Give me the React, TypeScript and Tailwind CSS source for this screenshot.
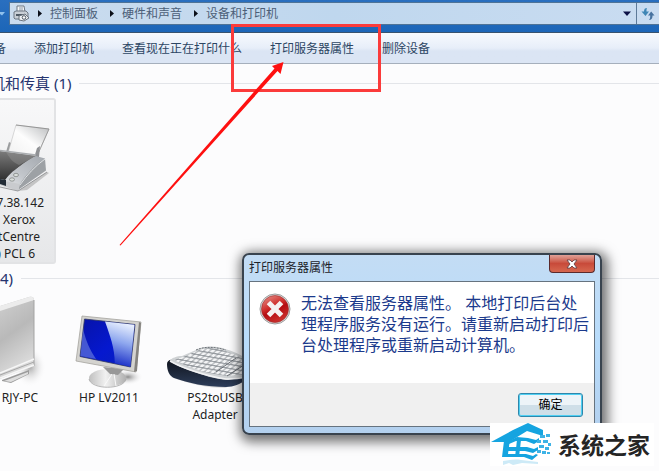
import { useState } from "react"
import type { ReactNode } from "react"

const crumbs = ["控制面板", "硬件和声音", "设备和打印机"]

const commands = [
  "备",
  "添加打印机",
  "查看现在正在打印什么",
  "打印服务器属性",
  "删除设备",
]

const PrinterSmallIcon = () => (
  <svg width="17" height="17" viewBox="0 0 17 17" aria-hidden="true">
    <path d="M4 1h7l1 6H4z" fill="#f5f7f9" stroke="#6d7782" />
    <path d="M6 3h4M6 5h4" stroke="#8d98a5" />
    <path d="M1 7l2-1h10l2 2v5l-2 1H2l-1-1z" fill="#c9cfd6" stroke="#6d7782" />
    <path d="M3 9h8v2H3z" fill="#4e5964" />
    <path d="M6 11l6-2 4 4-5 3-5-1z" fill="#eef1f4" stroke="#6a747f" />
    <circle cx="11" cy="12.5" r="1.8" fill="#fff" stroke="#4e5964" />
  </svg>
)

const RefreshIcon = () => (
  <svg width="14" height="14" viewBox="0 0 14 14" aria-hidden="true">
    <path d="M6 1C4 1 3 2 3 4.500H0.500L4.500 9l3.500-4.500H5.500C5.500 3 5.500 2 6 1z" fill="#3f86b5" />
    <path d="M8 13c2 0 3.500-1 3.500-4.500h2L10.200 4.500 7 8.500h2.200C9.200 11 9 12 8 13z" fill="#47729f" />
  </svg>
)

const PrinterIcon = () => (
  <svg width="56" height="76" viewBox="0 118 56 76" aria-hidden="true">
    <defs>
      <linearGradient id="paper" x1="0" y1="1" x2="1" y2="0">
        <stop offset="0" stopColor="#f0f0f0" />
        <stop offset="0.500" stopColor="#fdfdfd" />
        <stop offset="1" stopColor="#b9bbbd" />
      </linearGradient>
      <linearGradient id="tray" x1="0" y1="0" x2="0" y2="1">
        <stop offset="0" stopColor="#7c7c7c" />
        <stop offset="1" stopColor="#303030" />
      </linearGradient>
      <linearGradient id="side" x1="1" y1="0" x2="0" y2="1">
        <stop offset="0" stopColor="#a3a8ae" />
        <stop offset="0.600" stopColor="#c2c6cb" />
        <stop offset="1" stopColor="#e3e5e7" />
      </linearGradient>
    </defs>
    <path d="M18 191L47 172l2 1-22 17z" fill="#999" opacity="0.500" />
    <path d="M6 152l3-10 2 1-1 10z" fill="#9a9c9e" />
    <path d="M16 125l33 4-12 27-29-3z" fill="url(#paper)" stroke="#b5b5b5" strokeWidth="0.500" />
    <path d="M16 125l33 4" stroke="#888" strokeWidth="0.800" />
    <path d="M49 129l-12 27" stroke="#909090" strokeWidth="0.800" />
    <path d="M34 158l3-10 3-2-1 11z" fill="#8f9194" />
    <path d="M0 151l36 5-17 11-14 13-5-1z" fill="url(#tray)" />
    <path d="M6 152c4 6 6 10 13 13l17-9z" fill="#999" opacity="0.400" />
    <path d="M0 150.500l36 4.500" stroke="#aaadb0" strokeWidth="1.500" />
    <path d="M36 156l9 2.500L20 187l-15-6c2-5 8-10 14-14 6-5 11-8 17-11z" fill="url(#side)" />
    <path d="M45 158.500l1 12L18 190l2-6c5-8 14-19 25-25.500z" fill="#9da1a5" />
    <path d="M20 185c7-10 15-19 25-26" stroke="#dfe2e4" fill="none" />
    <path d="M0 180l5 1 15 3-2 7-18-6z" fill="#c9cbce" />
    <path d="M0 179l6 1v6l-6-2z" fill="#222c36" />
    <path d="M0 187l18 4 29-19" stroke="#858789" strokeWidth="0.800" fill="none" />
    <ellipse cx="16" cy="175" rx="2.500" ry="1.700" fill="#d9dedb" stroke="#838785" strokeWidth="0.800" />
    <ellipse cx="12" cy="179.500" rx="2.500" ry="1.700" fill="#d9dedb" stroke="#838785" strokeWidth="0.800" />
  </svg>
)

const TowerIcon = () => (
  <svg width="56" height="93" viewBox="0 297 56 93" aria-hidden="true">
    <defs>
      <linearGradient id="tower" x1="0" y1="0" x2="0.300" y2="1">
        <stop offset="0" stopColor="#d0d0d0" />
        <stop offset="0.500" stopColor="#b9b9b9" />
        <stop offset="1" stopColor="#dedede" />
      </linearGradient>
      <radialGradient id="towerShade">
        <stop offset="0" stopColor="#a8a8a8" />
        <stop offset="1" stopColor="#fcfcfd" stopOpacity="0" />
      </radialGradient>
    </defs>
    <ellipse cx="30" cy="368" rx="16" ry="20" fill="url(#towerShade)" />
    <path d="M0 307l29-9c3-1 5 0 5 3v66L0 380z" fill="url(#tower)" />
    <path d="M0 307l29-9c3-1 5 0 5 3L0 312z" fill="#ececec" />
    <path d="M34 301v66" stroke="#a3a3a3" />
    <path d="M0 374l34-14M0 379l34-13" stroke="#f6f6f6" strokeWidth="1.500" />
    <path d="M0 376l34-13" stroke="#a6a6a6" />
    <path d="M2 381l27-10v4l-18 9-9-2z" fill="#9b9b9b" />
    <path d="M4 382l24-9v2l-17 8z" fill="#dedede" />
  </svg>
)

const MonitorIcon = () => (
  <svg width="70" height="75" viewBox="74 315 70 75" aria-hidden="true">
    <defs>
      <linearGradient id="screen" x1="0" y1="0" x2="1" y2="1">
        <stop offset="0" stopColor="#0713a8" />
        <stop offset="0.550" stopColor="#0518cf" />
        <stop offset="1" stopColor="#0a21b8" />
      </linearGradient>
      <linearGradient id="glare" x1="0.600" y1="0" x2="0.400" y2="1">
        <stop offset="0" stopColor="#eef4ff" />
        <stop offset="0.450" stopColor="#8ea7ee" />
        <stop offset="1" stopColor="#1226c4" />
      </linearGradient>
      <linearGradient id="stand">
        <stop offset="0" stopColor="#c0c0c0" />
        <stop offset="0.450" stopColor="#f1f1f1" />
        <stop offset="1" stopColor="#b0b0b0" />
      </linearGradient>
      <radialGradient id="standShade">
        <stop offset="0" stopColor="#8c8c8c" />
        <stop offset="1" stopColor="#fcfcfd" stopOpacity="0" />
      </radialGradient>
    </defs>
    <ellipse cx="128" cy="378" rx="15" ry="8" fill="url(#standShade)" />
    <ellipse cx="107.500" cy="379" rx="18.500" ry="9" fill="url(#stand)" />
    <path d="M89 380c2 11 35 11 37 0" fill="none" stroke="#a5a5a5" strokeWidth="0.800" />
    <path d="M103 368l21 2-6 6-8-1z" fill="#989898" />
    <path d="M112 375l-8 12M114 375l2 12" stroke="#fafafa" />
    <path d="M82 317l59 6-5 50-60-11z" fill="#d4d3cf" stroke="#a5a39e" strokeWidth="0.800" />
    <path d="M139 323l2 1-4 48-3 1z" fill="#85837f" />
    <path d="M84.500 320l50.500 5.500-4.500 42.500-50.500-10.500z" fill="url(#screen)" stroke="#30375f" strokeWidth="0.800" />
    <path d="M105 322.500l29.500 3.200-4.200 42-15.500-3.500c0-15-5-28-9.800-41.700z" fill="url(#glare)" />
    <path d="M83 330c3 12 7 21 13 30l-15.500-3z" fill="#6175dc" opacity="0.700" />
  </svg>
)

const KeyboardIcon = () => (
  <svg width="84" height="50" viewBox="162 340 84 50" aria-hidden="true">
    <defs>
      <pattern id="keys" width="5" height="4" patternUnits="userSpaceOnUse" patternTransform="rotate(10) skewX(-38)">
        <rect width="5" height="4" fill="#92979c" />
        <rect x="0.500" y="0.500" width="4" height="2.900" rx="0.500" fill="#f3f4f5" />
      </pattern>
      <linearGradient id="rest" x1="0" y1="0" x2="0" y2="1">
        <stop offset="0" stopColor="#10141d" />
        <stop offset="1" stopColor="#2d3d5a" />
      </linearGradient>
    </defs>
    <path d="M171 378c20 8 40 11 54 11l20-9v-6z" fill="#bbb" opacity="0.500" />
    <path d="M167 365c0-3 3-5 6-4l57 16 16-2v6c-6 4-12 7-20 7-20 0-38-4-52-9-5-2-7-8-7-14z" fill="url(#rest)" />
    <path d="M170 362c1-3 7-5 12-5l14-6c9-5 22-4 29-1 8 2 15 5 21 10v18l-18 3c-14-1-25-5-37-9-8-3-16-6-21-10z" fill="#cfd2d4" />
    <path d="M174 361l9-3 14-6c9-4 20-3 28 0 7 2 14 5 20 9v14l-17 2c-17-2-37-7-54-16z" fill="url(#keys)" />
    <path d="M170 362c12 7 36 15 56 18 7 0 13 0 20-2" fill="none" stroke="#f1f2f3" strokeWidth="1.500" />
    <path d="M216 373l20-14M227 377l17-11" stroke="#686d73" />
    <path d="M196 351c9-4 20-3 30 0" stroke="#6b7177" fill="none" strokeDasharray="2 1" />
  </svg>
)

const ErrorIcon = () => (
  <svg width="32" height="32" viewBox="0 0 32 32" className="shrink-0" role="img" aria-label="错误">
    <defs>
      <linearGradient id="err" x1="0.200" y1="0" x2="0.700" y2="1">
        <stop offset="0" stopColor="#e48a83" />
        <stop offset="0.400" stopColor="#cf2d2b" />
        <stop offset="0.550" stopColor="#b40c12" />
        <stop offset="1" stopColor="#cf3531" />
      </linearGradient>
    </defs>
    <circle cx="16" cy="16" r="15" fill="#dcdcdc" stroke="#9d9d9d" />
    <circle cx="16" cy="16" r="13.500" fill="url(#err)" stroke="#9a2a2a" strokeWidth="0.600" />
    <path d="M9.500 9.500l13 13M22.500 9.500l-13 13" stroke="#f5f1f1" strokeWidth="5" />
  </svg>
)

const HouseLogo = () => (
  <svg width="62" height="43" viewBox="490 423 62 43" aria-hidden="true">
    <g fill="#15a4e0">
      <path d="M491 442l22-12 15-7 15 7v6l-16-5-18 11z" />
      <path d="M504 441l6-2-2 15h3v3h-9z" />
      <path d="M509 441l8-4 11 1 8 2 3-2v3l-5 3-8-3h-10l-7 3z" />
      <path d="M517 440h4l-2 17h-4z" />
      <path d="M508 447h19l7 2 4-2v3l-5 3-8-2h-17z" />
      <path d="M508 454h18l7 2 3-2 2 1-6 5-8-3h-17z" />
    </g>
    <path
      d="M540 435h5v3h-5zM546 434h4v3h-4zM537 440h4v3h-4zM543 440h5v3h-5zM548 443h3v3h-3zM539 445h5v3h-5zM545 447h4v3h-4zM537 450h4v3h-4zM542 451h4v3h-4zM547 452h3v2h-3z"
      fill="#3eb3e6"
    />
    <path d="M503 461c6-1 12-2 18-1l17 2v2l-16-1-9 2-4-2-6 2z" fill="#cdeaf7" />
  </svg>
)

type SectionProps = {
  title: string
  children: ReactNode
}

const Section = ({ title, children }: SectionProps) => (
  <section>
    <div className="flex h-6 items-center gap-2">
      <h2 className="whitespace-nowrap text-[15px] leading-6 text-[#25346f]">{title}</h2>
      <div className="h-px flex-1 bg-[#e3e5e9]" />
    </div>
    {children}
  </section>
)

type ErrorDialogProps = {
  onClose: () => void
}

const ErrorDialog = ({ onClose }: ErrorDialogProps) => (
  <div
    role="dialog"
    aria-labelledby="dialog-title"
    className="absolute left-[242px] top-[253px] w-[360px] rounded-[7px] border-2 border-[#39434e] bg-linear-to-b from-[#c3dcf4] via-[#b8dcfb] to-[#b3d0ee] px-[5px] pb-[6px] shadow-[2px_3px_12px_4px_rgba(0,0,0,0.55)]"
  >
    <div className="flex h-[26px] items-start justify-between">
      <h1 id="dialog-title" className="text-xs leading-[26px] text-[#1c2229]">
        打印服务器属性
      </h1>
      <button
        onClick={onClose}
        aria-label="关闭"
        className="flex h-[18px] w-[46px] items-center justify-center rounded-b-[4px] border border-t-0 border-[#5b2a2c] bg-linear-to-b from-[#dfa198] from-0% via-[#c84a3a] via-50% to-[#d6674f]"
      >
        <svg width="12" height="10" viewBox="0 0 12 10" aria-hidden="true">
          <path d="M1 1h3l2 2 2-2h3L8 5l3 4H8L6 7 4 9H1l3-4z" fill="#fff" stroke="#5a3a40" strokeWidth="0.800" />
        </svg>
      </button>
    </div>
    <div className="border border-[#66737f] bg-white">
      <div className="flex h-[101px] items-start gap-[10px] pl-[9px] pt-[11px]">
        <ErrorIcon />
        <p className="whitespace-nowrap text-base leading-[21px] text-[#1b3a8c]">
          无法查看服务器属性。 本地打印后台处
          <br />
          理程序服务没有运行。请重新启动打印后
          <br />
          台处理程序或重新启动计算机。
        </p>
      </div>
      <div className="flex h-[43px] items-start justify-end bg-[#f0f0f0] pr-[11px] pt-[10px]">
        <button
          onClick={onClose}
          className="h-6 w-[65px] rounded-[3px] border border-[#2e87ac] bg-linear-to-b from-[#edf4f8] from-50% to-[#cfdfe8] to-50% text-xs text-black shadow-[inset_0_0_0_1px_#4fd0f3]"
        >
          确定
        </button>
      </div>
    </div>
  </div>
)

const App = () => {
  const [open, setOpen] = useState(true)

  return (
    <div className="relative min-h-screen overflow-hidden bg-[#fcfcfd] font-['Noto_Sans','Noto_Sans_CJK_SC',sans-serif]">
      <header className="flex h-[33px] items-start border-b border-[#38536f] bg-linear-to-b from-[#2a6fbf] to-[#1c66b8] pt-[2px]">
        <div className="flex h-[23px] w-[9px] items-center">
          <svg width="6" height="4" viewBox="0 0 6 4" aria-hidden="true">
            <path d="M0 0h5L2 3.500 0 2z" fill="#8fc0ec" />
          </svg>
        </div>
        <div className="flex h-[23px] min-w-0 flex-1 items-center border border-r-0 border-[#4f7396] bg-linear-to-r from-[#cbdcee] via-[#bfd7ee] to-[#c9dcf1] pl-[3px]">
          <PrinterSmallIcon />
          <nav className="flex flex-1 items-center">
            {crumbs.map((crumb) => (
              <div key={crumb} className="flex items-center">
                <svg width="20" height="9" viewBox="0 0 20 9" aria-hidden="true">
                  <path d="M8 1l4 3.500L8 8z" fill="#0b0f18" />
                </svg>
                <a href="#" className="mr-1 text-xs leading-5 text-[#4c5f78]">
                  {crumb}
                </a>
              </div>
            ))}
          </nav>
          <button aria-label="历史记录" className="flex h-full w-[19px] items-center justify-center border-r border-[#5d7a99]">
            <svg width="8" height="5" viewBox="0 0 8 5" aria-hidden="true">
              <path d="M0 0.500h8L4 5z" fill="#0c1145" />
            </svg>
          </button>
          <button aria-label="刷新" className="flex h-full w-[22px] items-center justify-center">
            <RefreshIcon />
          </button>
        </div>
      </header>

      <div className="flex h-[31px] items-center gap-7 border-b border-[#a5afbc] bg-linear-to-b from-[#f7fafe] from-0% via-[#e7eef9] via-50% to-[#dbe5f4] to-60% pt-[2px]">
        {commands.map((command) => (
          <button key={command} className="whitespace-nowrap text-xs leading-5 text-[#2c4563] first:-ml-[6px]">
            {command}
          </button>
        ))}
      </div>

      <main className="flex flex-col gap-[2px] pt-[7px]">
        <div className="-ml-[10px]">
          <Section title="机和传真 (1)">
            <div className="mt-[3px] ml-[10px] w-14 rounded-r-[3px] border-2 border-l-0 border-[#e2e3e5] bg-linear-to-b from-[#f8f8f9] to-[#e6e7e9] pt-[18px] text-right text-xs leading-[17px] whitespace-nowrap text-[#222]">
              <PrinterIcon />
              <p className="flex justify-end pr-[10px]">7.38.142</p>
              <p className="pr-[19px]">Xerox</p>
              <p className="flex justify-end pr-[14px]">tCentre</p>
              <p className="flex justify-end pr-[19px]">) PCL 6</p>
            </div>
          </Section>
        </div>

        <Section title="4)">
          <div className="flex items-end text-center text-xs leading-[17px] text-[#222]">
            <div className="flex h-[133px] w-14 flex-col justify-end pb-[17px]">
              <TowerIcon />
              <p className="flex justify-end whitespace-nowrap pr-[18px]">RJY-PC</p>
            </div>
            <div className="flex h-[133px] w-[106px] flex-col items-center justify-end pb-[17px]">
              <MonitorIcon />
              <p>HP LV2011</p>
            </div>
            <div className="flex h-[133px] w-[106px] flex-col justify-end">
              <KeyboardIcon />
              <p>
                PS2toUSB
                <br />
                Adapter
              </p>
            </div>
          </div>
        </Section>
      </main>

      {open && <ErrorDialog onClose={() => setOpen(false)} />}

      <svg
        width="300"
        height="260"
        viewBox="100 0 300 260"
        className="pointer-events-none absolute left-[100px] top-0"
        aria-hidden="true"
      >
        <rect x="232.500" y="25.500" width="147" height="65" fill="none" stroke="#fb3b3b" strokeWidth="3" />
        <path d="M119.500 245L274.500 68.500l-2.500-2.500 11.500-4-3 12-3-3L120.500 245.500z" fill="#fe1010" />
      </svg>

      <div className="absolute left-[490px] top-[423px] flex h-[43px] w-[164px] items-center gap-[6px] bg-white">
        <HouseLogo />
        <span className="whitespace-nowrap text-[23px] font-bold leading-8 text-[#252525]">系统之家</span>
      </div>
    </div>
  )
}

export default App
